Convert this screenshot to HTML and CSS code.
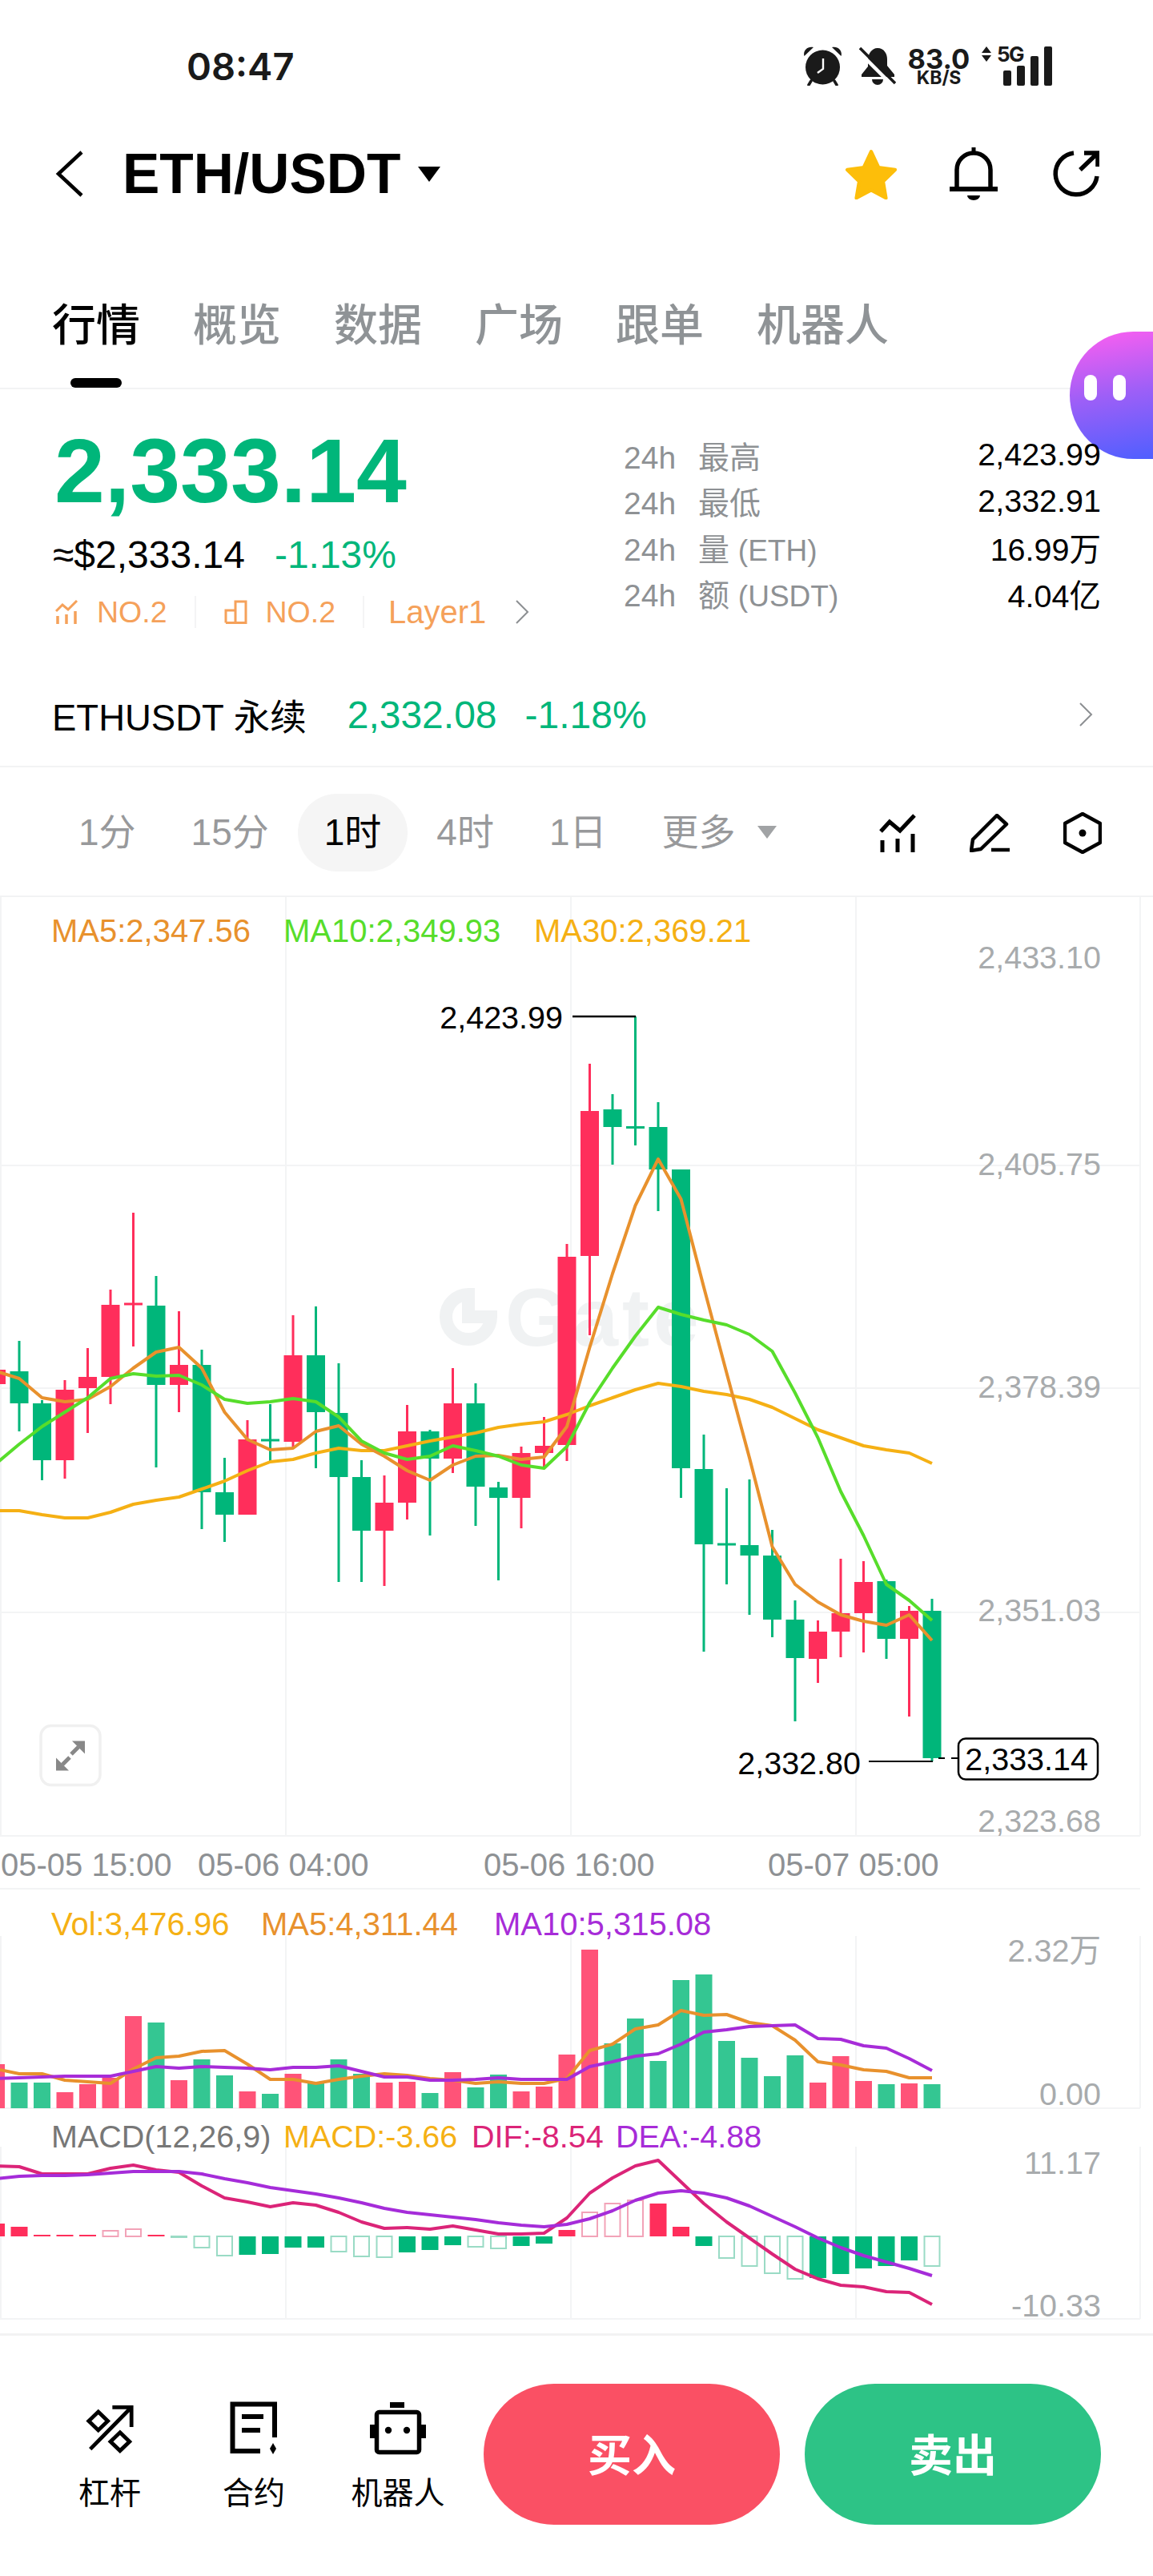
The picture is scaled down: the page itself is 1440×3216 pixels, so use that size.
FILE: index.html
```html
<!DOCTYPE html>
<html lang="zh">

<head>
    <meta charset="UTF-8">
    <meta name="viewport" content="width=device-width, initial-scale=1.0">
    <title>ETH/USDT</title>
    <link rel="stylesheet" href="styles.css">
</head>

<body>
    <!-- Status bar -->
    <div class="status-bar">
        <span class="clock">08:47</span>
        <div class="status-icons">
            <svg width="49" height="50" viewBox="0 0 49 50">
                <path d="M1.5 13C-.5 7 5 0 13 2ZM47.5 13C49.5 7 44 0 36 2Z" fill="#1a1a1a" />
                <circle cx="24.5" cy="27" r="21.5" fill="#1a1a1a" />
                <path d="M10 44 7 49M39 44l3 5" stroke="#1a1a1a" stroke-width="3.5" stroke-linecap="round" />
                <path d="M25 16V29l-7 5" stroke="#fff" stroke-width="2.4" fill="none" />
            </svg>
            <svg width="46" height="47" viewBox="0 0 46 47">
                <path d="M23 1c8 0 12 7 12 14v8l9 11v3H3v-3l8-10v-8C11 8 16 1 23 1Z" fill="#1a1a1a" />
                <path d="M16 40a7 7 0 0 0 14 0Z" fill="#1a1a1a" />
                <path d="M-3 3 41 47" stroke="#fff" stroke-width="4.5" />
                <path d="M1 1 45 45" stroke="#1a1a1a" stroke-width="3.5" />
            </svg>
            <div class="net-speed">
                <span class="net-value">83.0</span>
                <span class="net-unit">KB/S</span>
            </div>
            <svg class="signal" width="90" height="60" viewBox="0 -10 90 60">
                <path d="M7 1 13 9H1ZM1 12H13L7 20Z" fill="#1a1a1a" />
                <text class="signal-label" x="20" y="20">5G</text>
                <rect x="28" y="31" width="10" height="19" rx="2" fill="#1a1a1a" />
                <rect x="45" y="25" width="10" height="25" rx="2" fill="#1a1a1a" />
                <rect x="62" y="13" width="10" height="37" rx="2" fill="#1a1a1a" />
                <rect x="79" y="1" width="10" height="49" rx="2" fill="#1a1a1a" />
            </svg>
        </div>
    </div>

    <!-- Header -->
    <div class="nav">
        <svg class="nav-back" width="36" height="58" viewBox="0 0 36 58">
            <path d="M33 2 4 29l29 27" fill="none" stroke="#000" stroke-width="4.5" />
        </svg>
        <span class="nav-title">ETH/USDT</span>
        <span class="nav-caret"></span>
        <div class="nav-actions">
            <svg width="66" height="63" viewBox="4 2 62 60">
                <polygon points="35,5 43.8,23.9 63.5,26.7 49.3,40.6 52.6,60.3 35,51 17.4,60.3 20.7,40.6 6.5,26.700 26.2,23.9"
                    fill="#fdbe0a" stroke="#fdbe0a" stroke-width="4" stroke-linejoin="round" />
            </svg>
            <svg width="60" height="66" viewBox="0 0 60 66">
                <path d="M9 52V28a21 21 0 0 1 42 0V52" fill="none" stroke="#000" stroke-width="5.5" />
                <rect x="27.5" y="0" width="5" height="8" fill="#000" />
                <path d="M0 52H60" stroke="#000" stroke-width="6" />
                <path d="M22 60H38a8 6 0 0 1-16 0Z" fill="#000" />
            </svg>
            <svg class="nav-share" width="58" height="58" viewBox="0 0 58 58">
                <path d="M26 3A26 26 0 1 0 55 32" fill="none" stroke="#000" stroke-width="5.5" />
                <path d="M34 24 56 3M39 3H56V20" fill="none" stroke="#000" stroke-width="5.5" />
            </svg>
        </div>
    </div>

    <!-- Tabs -->
    <div class="tabs">
        <span class="tab active">行情</span>
        <span class="tab">概览</span>
        <span class="tab">数据</span>
        <span class="tab">广场</span>
        <span class="tab">跟单</span>
        <span class="tab">机器人</span>
    </div>

    <div class="float-bot">
        <span class="float-eye"></span>
        <span class="float-eye"></span>
    </div>

    <!-- Price summary -->
    <div class="quote">
        <div class="quote-left">
            <div class="price">2,333.14</div>
            <div class="price-sub">
                <span>≈$2,333.14</span>
                <span class="green">-1.13%</span>
            </div>
            <div class="rank-row">
                <svg class="rank-icon" width="30" height="30" viewBox="0 0 30 30">
                    <path d="M1 14 9 6l7 6L27 1" fill="none" stroke="#f5a15a" stroke-width="3" />
                    <path d="M3 20V30M14 18V30M25 14V30" stroke="#f5a15a" stroke-width="3.500" />
                </svg>
                <span class="rank">NO.2</span>
                <span class="rank-sep"></span>
                <svg class="rank-icon rank-icon-tight" width="30" height="30" viewBox="0 0 30 30">
                    <path d="M2 28.5H28.500M2 28.500V13H14M14 28.500V2H27V28.500" fill="none" stroke="#f5a15a" stroke-width="3" />
                </svg>
                <span class="rank">NO.2</span>
                <span class="rank-sep"></span>
                <span class="rank rank-name">Layer1</span>
                <svg class="rank-more" width="18" height="30" viewBox="0 0 18 30">
                    <path d="M2 1 16 15 2 29" fill="none" stroke="#8c8f92" stroke-width="2" />
                </svg>
            </div>
        </div>
        <div class="quote-stats">
            <div class="stat"><span class="stat-name"><span class="stat-period">24h</span>最高</span><span>2,423.99</span></div>
            <div class="stat"><span class="stat-name"><span class="stat-period">24h</span>最低</span><span>2,332.91</span></div>
            <div class="stat"><span class="stat-name"><span class="stat-period">24h</span>量 <span class="stat-unit">(ETH)</span></span><span>16.99万</span></div>
            <div class="stat"><span class="stat-name"><span class="stat-period">24h</span>额 <span class="stat-unit">(USDT)</span></span><span>4.04亿</span></div>
        </div>
    </div>

    <!-- Perpetual link -->
    <div class="perp">
        <span class="perp-name">ETHUSDT 永续</span>
        <span class="green perp-price">2,332.08</span>
        <span class="green perp-change">-1.18%</span>
        <svg class="perp-more" width="18" height="30" viewBox="0 0 18 30">
            <path d="M2 1 16 15 2 29" fill="none" stroke="#8c8f92" stroke-width="2" />
        </svg>
    </div>

    <!-- Intervals -->
    <div class="intervals">
        <span class="interval">1分</span>
        <span class="interval">15分</span>
        <span class="interval active">1时</span>
        <span class="interval">4时</span>
        <span class="interval">1日</span>
        <span class="interval">更多</span>
        <span class="interval-caret"></span>
        <div class="chart-tools">
            <svg width="46" height="48" viewBox="0 0 46 48">
                <path d="M2 22 13 10l13 11L44 2" fill="none" stroke="#000" stroke-width="5" />
                <path d="M4 33V48M23 31V48M42 25V48" stroke="#000" stroke-width="5" />
            </svg>
            <svg width="50" height="48" viewBox="0 0 50 48">
                <path d="M34 2 46 13 14 44 2 46 4 32Z" fill="none" stroke="#000" stroke-width="4.500" stroke-linejoin="round" />
                <path d="M27 45H50" stroke="#000" stroke-width="4.500" />
            </svg>
            <svg width="48" height="52" viewBox="0 0 48 52">
                <path d="M24 2 46 14V38L24 50 2 38V14Z" fill="none" stroke="#000" stroke-width="4.500" stroke-linejoin="round" />
                <circle cx="24" cy="26" r="4.500" fill="#000" />
            </svg>
        </div>
    </div>

    <!-- Chart -->
    <svg class="chart" id="chart" width="1440" height="1793" viewBox="0 1120 1440 1793">
        <g class="grid" id="grid"></g>

        <g class="watermark">
            <path d="M585 1616a28 28 0 1 0 28 28h-28z" fill="none" stroke="#f0f2f3" stroke-width="16" />
            <text class="watermark-text" x="631" y="1680">Gate</text>
        </g>

        <g id="candles"></g>
        <g id="volume"></g>
        <g id="macd"></g>
        <g id="lines"></g>

        <!-- legends -->
        <text class="legend c-ma5" x="64" y="1176">MA5:2,347.56</text>
        <text class="legend c-ma10" x="354" y="1176">MA10:2,349.93</text>
        <text class="legend c-ma30" x="667" y="1176">MA30:2,369.21</text>

        <text class="legend c-ma30" x="64" y="2416">Vol:3,476.96</text>
        <text class="legend c-ma5" x="326" y="2416">MA5:4,311.44</text>
        <text class="legend c-purple" x="617" y="2416">MA10:5,315.08</text>

        <text class="legend-small c-grey" x="64" y="2681">MACD(12,26,9)</text>
        <text class="legend-small c-ma30" x="354" y="2681">MACD:-3.66</text>
        <text class="legend-small c-pink" x="589" y="2681">DIF:-8.54</text>
        <text class="legend-small c-purple" x="769" y="2681">DEA:-4.88</text>

        <!-- axis -->
        <text class="axis" x="1375" y="1209">2,433.10</text>
        <text class="axis" x="1375" y="1467">2,405.75</text>
        <text class="axis" x="1375" y="1745">2,378.39</text>
        <text class="axis" x="1375" y="2024">2,351.03</text>
        <text class="axis" x="1375" y="2287">2,323.68</text>
        <text class="axis" x="1375" y="2449">2.32万</text>
        <text class="axis" x="1375" y="2628">0.00</text>
        <text class="axis" x="1375" y="2714">11.17</text>
        <text class="axis" x="1375" y="2892">-10.33</text>

        <text class="time" x="1" y="2342">05-05 15:00</text>
        <text class="time" x="247" y="2342">05-06 04:00</text>
        <text class="time" x="604" y="2342">05-06 16:00</text>
        <text class="time" x="959" y="2342">05-07 05:00</text>

        <!-- high, low and last price markers -->
        <text class="mark" x="703" y="1284">2,423.99</text>
        <path d="M715 1269H794" stroke="#000" stroke-width="2.500" />
        <text class="mark" x="1075" y="2215">2,332.80</text>
        <path d="M1085 2199H1165" stroke="#000" stroke-width="2" />
        <path d="M1172 2195H1180M1188 2195H1196" stroke="#000" stroke-width="2" />
        <rect x="1197" y="2170.500" width="174" height="51" rx="9" fill="#fff" stroke="#000" stroke-width="2.500" />
        <text class="mark" x="1359" y="2210">2,333.14</text>

        <!-- fullscreen button -->
        <rect x="51" y="2154.500" width="74" height="74" rx="13" fill="#fff" stroke="#f0f0f0" stroke-width="3.500" />
        <path d="M90 2173.500h16v16zM70 2194.500v16h16z" fill="#888" />
        <path d="M98 2181l-9 9M78 2203l9-9" stroke="#888" stroke-width="5" />
    </svg>

    <!-- Footer -->
    <div class="footer">
        <div class="footer-item">
            <svg width="61" height="64" viewBox="0 0 64 64">
                <path d="M6 60 60 5M35 5H60V31" fill="none" stroke="#000" stroke-width="5" />
                <path d="M16.500 11 29 23 16.500 35 4 23Z" fill="none" stroke="#000" stroke-width="5" />
                <path d="M45 38 57.500 50 45 62 32.500 50Z" fill="none" stroke="#000" stroke-width="5" />
            </svg>
            <span>杠杆</span>
        </div>
        <div class="footer-item">
            <svg width="64" height="68" viewBox="0 0 64 68">
                <path d="M40 63H5.500V4.500H58V46" fill="none" stroke="#000" stroke-width="6" />
                <path d="M17 20H44M17 37H40" stroke="#000" stroke-width="6" />
                <path d="M56 53 60 60 56 67 52 60Z" fill="#000" />
            </svg>
            <span>合约</span>
        </div>
        <div class="footer-item">
            <svg width="74" height="68" viewBox="0 0 74 68">
                <rect x="27" y="2" width="18" height="7" fill="#000" />
                <rect x="10.500" y="14.500" width="53" height="50" rx="3" fill="none" stroke="#000" stroke-width="5.500" />
                <rect x="2" y="30" width="6" height="17" fill="#000" />
                <rect x="66" y="30" width="6" height="17" fill="#000" />
                <circle cx="25" cy="37" r="4.200" fill="#000" />
                <circle cx="48" cy="37" r="4.200" fill="#000" />
            </svg>
            <span>机器人</span>
        </div>
        <div class="trade-btn buy">买入</div>
        <div class="trade-btn sell">卖出</div>
    </div>

    <script src="chart.js"></script>
</body>

</html>
```

FILE: styles.css
```css
* {
    box-sizing: border-box;
}

body {
    margin: 0;
    width: 1440px;
    height: 3216px;
    position: relative;
    overflow: hidden;
    background: #fff;
    color: #000;
    font-family: "Liberation Sans", "Noto Sans CJK SC", sans-serif;
    font-size: 39px;
}

.green {
    color: #00b67a;
}

/* status bar */
.status-bar {
    height: 150px;
    padding: 14px 125px 0 233px;
    display: flex;
    align-items: center;
    color: #1a1a1a;
}

.clock {
    font-family: Inter, sans-serif;
    font-weight: 600;
    font-size: 47px;
}

.status-icons {
    margin-left: auto;
    display: flex;
    align-items: center;
}

.status-icons svg + svg {
    margin-left: 21px;
}

.net-speed {
    width: 77px;
    margin-left: 15px;
    display: flex;
    flex-direction: column;
    align-items: center;
    font-family: Inter, sans-serif;
    font-weight: 700;
}

.net-value {
    font-size: 34.500px;
    line-height: 29px;
}

.net-unit {
    font-size: 23px;
    line-height: 18px;
}

.status-icons .signal {
    margin: -10px 0 0 14px;
}

.signal-label {
    font-family: Inter, sans-serif;
    font-weight: 700;
    font-size: 26px;
    letter-spacing: -1.500px;
    fill: #1a1a1a;
}

/* header */
.nav {
    height: 134px;
    padding: 0 67px 0 69px;
    display: flex;
    align-items: center;
}

.nav-title {
    margin-left: 48px;
    font-weight: 700;
    font-size: 69.500px;
}

.nav-caret {
    margin: 0 0 0 21px;
    border-left: 14px solid transparent;
    border-right: 14px solid transparent;
    border-top: 19px solid #000;
}

.nav-actions {
    margin-left: auto;
    display: flex;
    align-items: center;
    gap: 65px;
}

.nav-share {
    margin-left: 4px;
}

/* tabs */
.tabs {
    height: 202px;
    padding: 87px 0 0 65px;
    display: flex;
    gap: 66px;
    border-bottom: 2px solid #f2f3f4;
}

.tab {
    position: relative;
    font-size: 55px;
    font-weight: 500;
    line-height: 70px;
    color: #8f9396;
}

.tab.active {
    color: #000;
}

.tab.active::after {
    content: "";
    position: absolute;
    left: 23px;
    top: 101px;
    width: 64px;
    height: 12px;
    border-radius: 6px;
    background: #000;
}

.float-bot {
    position: absolute;
    right: 0;
    top: 414px;
    width: 104px;
    height: 159px;
    padding: 0 0 19px 18px;
    display: flex;
    align-items: center;
    gap: 20px;
    border-radius: 80px 0 0 80px;
    background: linear-gradient(170deg, #ff5ff0 0%, #9d5ff7 50%, #4f5fff 100%);
}

.float-eye {
    width: 16px;
    height: 32px;
    border-radius: 8px;
    background: #fff;
}

/* price summary */
.quote {
    position: relative;
    height: 344px;
    padding: 37px 65px 0 66px;
    display: flex;
    justify-content: space-between;
}

.quote-left {
    width: 620px;
}

.price {
    margin-left: 2px;
    height: 130px;
    line-height: 130px;
    font-weight: 700;
    font-size: 113px;
    color: #00b67a;
}

.price-sub {
    margin-top: 10px;
    height: 60px;
    line-height: 60px;
    font-size: 48px;
    display: flex;
    gap: 37px;
}

.rank-row {
    margin-top: 16px;
    height: 50px;
    display: flex;
    align-items: center;
    color: #f5a15a;
    font-size: 37.500px;
}

.rank-icon {
    margin-left: 3px;
    margin-right: 22px;
}

.rank-icon-tight {
    margin-left: 1px;
}

.rank-sep {
    width: 2px;
    height: 40px;
    margin: 0 34px;
    background: #f4f4f5;
}

.rank-name {
    font-size: 40px;
    margin-left: -4px;
}

.rank-more {
    margin-left: 36px;
}

.quote-stats {
    width: 596px;
    padding-top: 16px;
}

.stat {
    height: 57.500px;
    display: flex;
    justify-content: space-between;
    align-items: center;
    font-size: 39.500px;
}

.stat-name {
    color: #8e9194;
    font-size: 39px;
}

.stat-unit {
    font-size: 37px;
}

.stat-period {
    display: inline-block;
    width: 93px;
}

/* perpetual link */
.perp {
    height: 128px;
    padding: 0 75px 2px 65px;
    display: flex;
    align-items: center;
    border-bottom: 2px solid #f2f3f4;
    font-size: 48px;
}

.perp-name {
    font-size: 45.500px;
}

.perp-price {
    margin-left: 51px;
}

.perp-change {
    margin-left: 35px;
}

.perp-more {
    margin-left: auto;
}

/* intervals */
.intervals {
    height: 162px;
    padding: 2px 64px 0 65px;
    display: flex;
    align-items: center;
    gap: 3px;
    border-bottom: 2px solid #f2f3f4;
    font-size: 46px;
    color: #98999b;
}

.interval {
    height: 97px;
    line-height: 97px;
    padding: 0 33px;
    border-radius: 49px;
}

.interval.active {
    background: #f5f5f5;
    color: #000;
}

.interval-caret {
    margin-left: -9px;
    border-left: 12px solid transparent;
    border-right: 12px solid transparent;
    border-top: 16px solid #a1a3a5;
}

.chart-tools {
    margin-left: auto;
    display: flex;
    align-items: center;
    gap: 67px;
    padding-top: 2px;
}

/* chart */
.chart {
    display: block;
}

.chart text {
    font-family: "Liberation Sans", "Noto Sans CJK SC", sans-serif;
    font-size: 39.500px;
}

.chart .legend,
.chart .time {
    font-size: 40px;
}

.grid line {
    stroke: #f3f4f5;
    stroke-width: 2;
}

.chart .watermark-text {
    font-weight: 700;
    font-size: 102px;
    letter-spacing: 5px;
    fill: #f0f2f3;
}

.c-ma5 {
    fill: #e8912d;
}

.c-ma10 {
    fill: #57dd2b;
}

.c-ma30 {
    fill: #f5b014;
}

.c-purple {
    fill: #a72cd8;
}

.c-pink {
    fill: #db2478;
}

.c-grey {
    fill: #777;
}

.axis {
    text-anchor: end;
    fill: #a8abad;
}

.time {
    fill: #8e9194;
}

.mark {
    text-anchor: end;
    fill: #000;
}

/* footer */
.footer {
    height: 303px;
    padding: 60px 0 0 47px;
    display: flex;
    align-items: flex-start;
    border-top: 3px solid #f2f2f3;
}

.footer-item {
    width: 180px;
    padding-top: 21px;
    display: flex;
    flex-direction: column;
    align-items: center;
    gap: 27px;
    font-size: 39px;
    line-height: 42px;
}

.footer-item svg {
    height: 68px;
}

.trade-btn {
    height: 176px;
    width: 370px;
    padding-top: 2px;
    border-radius: 88px;
    text-align: center;
    line-height: 176px;
    color: #fff;
    font-weight: 700;
    font-size: 55px;
}

.buy {
    margin-left: 17px;
    background: #fa5064;
}

.sell {
    margin-left: 31px;
    background: #2dc386;
}
```

FILE: chart.js
```js
const RED = '#ff2e5b';
const GREEN = '#00b67a';
const NS = 'http://www.w3.org/2000/svg';

// first entry is the half hidden bar on the left edge
const xAt = (k) => -4.5 + 28.5 * k;

// [bodyTop, bodyBottom, wickTop, wickBottom, 1 = up]
const candles = [
    [1710, 1728, 1700, 1735, 1], [1712, 1752, 1674, 1787, 0], [1752, 1823, 1748, 1848, 0],
    [1735, 1823, 1723, 1846, 1], [1719, 1733, 1683, 1789, 1], [1629, 1719, 1610, 1753, 1],
    [1626.5, 1629.5, 1514, 1681, 1], [1630, 1729, 1593, 1832, 0], [1704, 1729, 1637, 1763, 1],
    [1704, 1863, 1685, 1909, 0], [1863, 1891, 1820, 1925, 0], [1797, 1891, 1773, 1891, 1],
    [1796.5, 1799.5, 1753, 1824, 0], [1692, 1800, 1642, 1808, 1], [1692, 1763, 1631, 1833, 0],
    [1764, 1844, 1702, 1975, 0], [1844, 1911, 1823, 1975, 0], [1876, 1911, 1842, 1980, 1],
    [1787, 1876, 1754, 1897, 1], [1787, 1821, 1785, 1917, 0], [1752, 1821, 1708, 1839, 1],
    [1752, 1856, 1727, 1905, 0], [1857, 1870, 1850, 1973, 0], [1814, 1870, 1806, 1908, 1],
    [1805, 1814, 1769, 1832, 1], [1569, 1804, 1553, 1824, 1], [1387, 1568, 1328, 1667, 1],
    [1385, 1407, 1366, 1454, 0], [1406, 1409, 1269, 1430, 0], [1407, 1460, 1376, 1512, 0],
    [1460, 1833, 1460, 1870, 0], [1834, 1928, 1791, 2062, 0], [1926.5, 1929.5, 1858, 1978, 0],
    [1929, 1942, 1847, 2016, 0], [1942, 2022, 1910, 2044, 0], [2022, 2070, 1998, 2149, 0],
    [2037, 2071, 2023, 2101, 1], [2014, 2037, 1946, 2069, 1], [1975, 2014, 1949, 2063, 1],
    [1974, 2046, 1972, 2071, 0], [2011, 2046, 2005, 2143, 1], [2011, 2195, 1996, 2199, 0],
];

const ma5 = [1712, 1721, 1745, 1750, 1747, 1731, 1708, 1688, 1682, 1708, 1763, 1797, 1810, 1808, 1787, 1780, 1803, 1818, 1836, 1848, 1829, 1818, 1817, 1822, 1819, 1781, 1682, 1590, 1505, 1447, 1497, 1607, 1714, 1820, 1931, 1978, 2000, 2016, 2024, 2029, 2016, 2048];
const ma10 = [1827, 1803, 1781, 1763, 1745, 1721, 1715, 1718, 1717, 1729, 1747, 1752, 1750, 1746, 1750, 1769, 1799, 1814, 1822, 1818, 1805, 1811, 1818, 1829, 1833, 1806, 1751, 1708, 1668, 1632, 1641, 1648, 1654, 1666, 1687, 1739, 1795, 1862, 1917, 1978, 1998, 2023];
const ma30 = [1886, 1886, 1891, 1895, 1895, 1888, 1878, 1873, 1869, 1859, 1849, 1836, 1825, 1822, 1814, 1808, 1811, 1811, 1805, 1799, 1794, 1789, 1782, 1778, 1775, 1766, 1755, 1745, 1735, 1727, 1731, 1737, 1741, 1747, 1757, 1771, 1785, 1795, 1805, 1810, 1814, 1827];

const volTops = [2577, 2600, 2600, 2612, 2602, 2594, 2517, 2525, 2597, 2571, 2591, 2611, 2614, 2589, 2600, 2571, 2589, 2600, 2599, 2613, 2587, 2606, 2590, 2611, 2605, 2565, 2434, 2551, 2520, 2573, 2472, 2465, 2548, 2569, 2592, 2566, 2600, 2567, 2598, 2602, 2601, 2602];
const volMa5 = [2583, 2589, 2589, 2597, 2599, 2601, 2583, 2569, 2567, 2561, 2560, 2577, 2596, 2596, 2601, 2596, 2592, 2589, 2591, 2595, 2597, 2601, 2599, 2601, 2601, 2595, 2560, 2552, 2533, 2528, 2510, 2516, 2515, 2525, 2529, 2547, 2574, 2578, 2584, 2586, 2594, 2594];
const volMa10 = [2595, 2594, 2593, 2592, 2592, 2592, 2586, 2580, 2582, 2580, 2581, 2582, 2584, 2581, 2581, 2579, 2586, 2593, 2593, 2597, 2597, 2596, 2594, 2596, 2596, 2596, 2580, 2574, 2567, 2564, 2552, 2537, 2534, 2530, 2529, 2528, 2545, 2546, 2554, 2557, 2570, 2585];

// [barEnd, 1 = filled]; bars grow from the zero line at 2792
const macdZero = 2792;
const macdBars = [
    [2776, 1], [2780, 1], [2790, 1], [2790, 1], [2790, 1], [2785, 0], [2783, 0], [2790, 1], [2793, 0], [2806, 0],
    [2816, 0], [2815, 1], [2814, 1], [2806, 1], [2806, 1], [2811, 0], [2817, 0], [2818, 0], [2812, 1], [2809, 1],
    [2803, 1], [2805, 0], [2807, 0], [2804, 1], [2801, 1], [2784, 1], [2762, 0], [2751, 0], [2747, 0], [2751, 1],
    [2780, 1], [2804, 1], [2819, 0], [2829, 0], [2838, 0], [2845, 0], [2844, 1], [2839, 1], [2832, 1], [2829, 1],
    [2822, 1], [2829, 0],
];
const dif = [2704, 2705, 2714, 2714, 2714, 2707, 2703, 2709, 2712, 2729, 2744, 2749, 2755, 2750, 2753, 2762, 2774, 2782, 2781, 2783, 2779, 2784, 2789, 2789, 2788, 2769, 2738, 2719, 2704, 2697, 2724, 2751, 2774, 2794, 2814, 2833, 2845, 2853, 2855, 2861, 2862, 2877];
const dea = [2720, 2717, 2716, 2716, 2715, 2713, 2711, 2711, 2711, 2714, 2720, 2725, 2731, 2735, 2739, 2744, 2750, 2757, 2762, 2765, 2768, 2771, 2775, 2778, 2780, 2777, 2770, 2760, 2747, 2738, 2735, 2738, 2744, 2754, 2767, 2780, 2794, 2806, 2816, 2824, 2832, 2841];

function add(parent, name, attrs) {
    const el = document.createElementNS(NS, name);
    for (const key in attrs) {
        el.setAttribute(key, attrs[key]);
    }
    document.getElementById(parent).appendChild(el);
}

function drawLine(points, color) {
    add('lines', 'polyline', {
        points: points.map((y, k) => `${xAt(k)},${y}`).join(' '),
        fill: 'none',
        stroke: color,
        'stroke-width': 4,
        'stroke-linejoin': 'round',
    });
}

// Grid
[0, 356, 712, 1068, 1423].forEach((x) => {
    [[1120, 2292], [2417, 2632], [2680, 2895]].forEach(([y1, y2]) => {
        add('grid', 'line', { x1: x + 1, x2: x + 1, y1, y2 });
    });
});
[1455, 1733, 2013, 2292, 2358, 2632, 2895].forEach((y) => {
    add('grid', 'line', { x1: 0, x2: 1424, y1: y, y2: y });
});

// Candles
candles.forEach(([top, bottom, high, low, up], k) => {
    const x = xAt(k);
    const color = up ? RED : GREEN;
    add('candles', 'rect', { x: x - 1.5, y: high, width: 3, height: low - high, fill: color });
    add('candles', 'rect', { x: x - 11.5, y: top, width: 23, height: bottom - top, fill: color });
});

// Volume
volTops.forEach((top, k) => {
    add('volume', 'rect', {
        x: xAt(k) - 10.5,
        y: top,
        width: 21,
        height: 2632 - top,
        fill: candles[k][4] ? '#ff5378' : '#34c692',
    });
});

// MACD histogram
macdBars.forEach(([end, filled], k) => {
    const up = end < macdZero;
    const y = Math.min(end, macdZero);
    const h = Math.abs(end - macdZero);
    if (filled) {
        add('macd', 'rect', { x: xAt(k) - 10.5, y, width: 21, height: h, fill: up ? RED : GREEN });
    } else {
        add('macd', 'rect', {
            x: xAt(k) - 9.5,
            y,
            width: 19,
            height: h,
            fill: 'none',
            stroke: up ? '#f2a3b8' : '#9adbc5',
            'stroke-width': 2,
        });
    }
});

drawLine(ma30, '#f5b014');
drawLine(ma5, '#e8912d');
drawLine(ma10, '#57dd2b');
drawLine(volMa5, '#e8912d');
drawLine(volMa10, '#a72cd8');
drawLine(dif, '#db2478');
drawLine(dea, '#a52cd9');
```
